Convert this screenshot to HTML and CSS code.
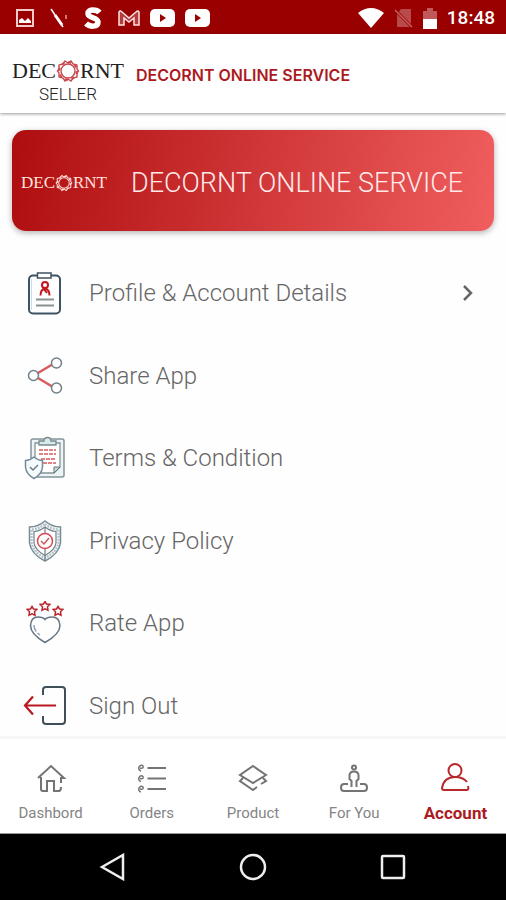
FILE: index.html
```html
<!DOCTYPE html>
<html lang="en">
<head>
<meta charset="utf-8">
<meta name="viewport" content="width=device-width, initial-scale=1">
<title>Decornt Seller</title>
<link rel="stylesheet" href="styles.css">
</head>
<body>
<svg class="sprite" aria-hidden="true">
  <symbol id="ring" viewBox="0 0 24 24">
    <g fill="none" stroke="currentColor" stroke-width="1.400">
      <circle cx="12" cy="12" r="7"/>
      <path d="M9 2 12 4 15 2 17 5 21 6V10L22.500 12 21 14V18L17 19 15 22 12 20 9 22 7 19 3 18V14L1.500 12 3 10V6L7 5Z"/>
      <circle cx="12" cy="12" r="8.800" stroke-width="2" stroke-dasharray="3 3.910"/>
    </g>
  </symbol>
  <symbol id="star" viewBox="0 0 12 12">
    <path d="M6 1.5 7.5 4 10.8 4.4 8.5 6.8 9 10.2 6 8.8 3 10.2 3.5 6.8 1.2 4.4 4.5 4Z" fill="none" stroke="#b8252b" stroke-width="1.5"/>
  </symbol>
</svg>

<div class="status">
  <div class="status-group status-left">
    <svg width="18" height="18" viewBox="0 0 18 18"><path d="M1 1H17V17H1Z" fill="none" stroke="#f3caca" stroke-width="2"/><path d="M3 14V11L6 9 9 12 12 9 15 12V14Z" fill="#fff"/></svg>
    <svg width="18" height="20" viewBox="0 0 18 20"><path d="M1 1 13 19" stroke="#fff" stroke-width="1.5"/><path d="M5 7 12 17" stroke="#fff" stroke-width="3"/><path d="M16 7V11" stroke="#e29a9a" stroke-width="1.5"/></svg>
    <svg width="18" height="24" viewBox="0 0 18 24"><path d="M15.500 6.500C13 3.500 4 2.500 4 7.500 4 12.500 14 11 14 16 14 21.500 5.500 21 2 17.500" fill="none" stroke="#fff" stroke-width="5.500"/></svg>
    <svg width="22" height="16" viewBox="0 0 22 16"><path d="M1 15V2Q2 0 4 2L11 8 18 2Q20 0 21 2V15H16V8L11 12 6 8V15Z" fill="#b43c3c" stroke="#fbe3e3" stroke-width="1.500"/></svg>
    <svg width="25" height="18" viewBox="0 0 25 18"><rect width="25" height="18" rx="5" fill="#fff"/><path d="M10 5 16 9 10 13Z" fill="#900"/></svg>
    <svg width="25" height="18" viewBox="0 0 25 18"><rect width="25" height="18" rx="5" fill="#fff"/><path d="M10 5 16 9 10 13Z" fill="#900"/></svg>
  </div>
  <div class="status-group">
    <svg width="26" height="20" viewBox="0 0 26 20"><path d="M0 5Q13-5 26 5L13 20Z" fill="#fff"/></svg>
    <svg width="19" height="20" viewBox="0 0 19 20"><path d="M7 1H17V19H3V6Z" fill="#b84a4a"/><path d="M1 2 18 19" stroke="#900" stroke-width="3"/><path d="M1 2 18 19" stroke="#c86464" stroke-width="1.500"/></svg>
    <svg width="14" height="21" viewBox="0 0 14 21"><path d="M0 3H4V0H10V3H14V12H0Z" fill="#c05a5a"/><path d="M0 11H14V21H0Z" fill="#fff"/></svg>
    <span class="clock">18:48</span>
  </div>
</div>

<header class="header">
  <div class="brand">
    <div class="logo"><span>DEC</span><svg class="ring" role="img" aria-label="O"><use href="#ring"/></svg><span>RNT</span></div>
    <div class="brand-sub">SELLER</div>
  </div>
  <h1 class="title">DECORNT ONLINE SERVICE</h1>
</header>

<main class="main">
  <section class="card">
    <div class="logo logo-small"><span>DEC</span><svg class="ring" role="img" aria-label="O"><use href="#ring"/></svg><span>RNT</span></div>
    <h2 class="card-title">DECORNT ONLINE SERVICE</h2>
  </section>

  <div class="menu">
    <a class="item" href="#profile">
      <svg class="icon" viewBox="0 0 44 44" fill="none">
        <rect x="6" y="4.500" width="31" height="38" rx="4" stroke="#3d5263" stroke-width="2"/>
        <path d="M8.500 8V39" stroke="#c5dff0"/>
        <path d="M15.500 2H28V7H14.500V2Z" fill="#fff" stroke="#3d5263" stroke-width="1.500"/>
        <circle cx="22" cy="14" r="3" stroke="#c01820" stroke-width="2"/>
        <path d="M17.500 24.500Q17.500 18.500 22 17.500 26.500 18.500 26.500 24.500M20 17 24 22" stroke="#c01820" stroke-width="2"/>
        <path d="M13 28.500H31M13 34.500H31" stroke="#87938f" stroke-width="2"/>
      </svg>
      <span class="label">Profile &amp; Account Details</span>
      <svg class="chevron" viewBox="0 0 12 18"><path d="M2 2 9 9 2 16" fill="none" stroke="#666" stroke-width="2.500"/></svg>
    </a>
    <a class="item" href="#share">
      <svg class="icon" viewBox="0 0 44 44" fill="none">
        <path d="M15 19 30 10M15 24 30 33" stroke="#d95a5e" stroke-width="2.500"/>
        <g stroke="#70808a" stroke-width="1.500" fill="#fff"><circle cx="33.500" cy="9" r="5"/><circle cx="10.500" cy="21.500" r="5"/><circle cx="33.500" cy="34" r="5"/></g>
      </svg>
      <span class="label">Share App</span>
    </a>
    <a class="item" href="#terms">
      <svg class="icon" viewBox="0 0 44 44" fill="none">
        <rect x="8" y="3" width="33" height="38" rx="2" fill="#eef4f4" stroke="#83949a" stroke-width="1.500"/>
        <path d="M12 7H37V31L31 37H12Z" fill="#fff" stroke="#83949a" stroke-width="1.300"/>
        <path d="M31 37V31H37Z" fill="#c9d8d8" stroke="#66757b"/>
        <path d="M16 9V5H21Q21 1.500 24.500 1.500T28 5H33V9Z" fill="#d9e8e8" stroke="#778a90" stroke-width="1.300"/>
        <path d="M16 14H33M16 18H33M18 23H33M20 27H33" stroke="#d65a5e" stroke-width="1.500" stroke-dasharray="4 1"/>
        <path d="M11 21Q7 24.500 2.500 24.500V31Q3 38 11 42.500 19 38 19.500 31V24.500Q15 24.500 11 21Z" fill="#f5fafc" stroke="#778a99" stroke-width="1.500"/>
        <path d="M7 31 10 34 15 29" stroke="#657985" stroke-width="1.400"/>
      </svg>
      <span class="label">Terms &amp; Condition</span>
    </a>
    <a class="item" href="#privacy">
      <svg class="icon" viewBox="0 0 44 44" fill="none">
        <path d="M22 2Q29 8 37.500 8V24Q36 35 22 42 8 35 6.500 24V8Q15 8 22 2Z" stroke="#788a94" stroke-width="1.500"/>
        <path d="M22 5Q28 10 35.500 10.500V24Q34 33 22 39 10 33 8.500 24V10.500Q16 10 22 5Z" stroke="#b3c3c9" stroke-width="2.500" stroke-dasharray="2 1"/>
        <path d="M22 8Q27 12 33 12.500V24Q32 31 22 36.500 12 31 11 24V12.500Q17 12 22 8Z" fill="#fff" stroke="#6f7f87" stroke-width="1.200"/>
        <path d="M22 8V15M22 30V41" stroke="#6f7f87" stroke-width="1.200"/>
        <circle cx="22" cy="22" r="7.500" fill="#fff" stroke="#d9484e" stroke-width="1.500"/>
        <path d="M18 22 21 25 26 19" stroke="#c85c5f" stroke-width="1.500"/>
      </svg>
      <span class="label">Privacy Policy</span>
    </a>
    <a class="item" href="#rate">
      <svg class="icon" viewBox="0 0 44 44" fill="none">
        <use href="#star" x="3" y="4" width="12" height="12"/><use href="#star" x="16" y="-1" width="12" height="12"/><use href="#star" x="29" y="4" width="12" height="12"/>
        <path d="M22 41.500Q7.500 33 7.500 24.500 8 16 15 16 20 16 22 18.500 24 16 29 16 36.500 16 37 24.500 37 33 22 41.500Z" stroke="#657480" stroke-width="1.500"/>
        <path d="M11 24Q11 30 17 34" stroke="#8aa5bb" stroke-width="1.500" stroke-dasharray="7 2"/>
      </svg>
      <span class="label">Rate App</span>
    </a>
    <a class="item" href="#signout">
      <svg class="icon" viewBox="0 0 44 44" fill="none">
        <path d="M20 11V6Q20 3 23 3H39Q42 3 42 6V37Q42 40 39 40H23Q20 40 20 37V32" stroke="#3f4f58" stroke-width="2"/>
        <path d="M33 21.500H2M10 12.500 2 21.500 10 30.500" stroke="#b81820" stroke-width="2.200"/>
      </svg>
      <span class="label">Sign Out</span>
    </a>
  </div>
</main>

<nav class="tabs">
  <a class="tab" href="#dashboard">
    <svg class="tab-icon" viewBox="0 0 30 30"><path d="M2 15 15 3 28 15H25V20M5 14V26Q5 28 7 28H11V18H18V28H23Q25 28 25 24"/></svg>
    <span>Dashbord</span>
  </a>
  <a class="tab" href="#orders">
    <svg class="tab-icon" viewBox="0 0 30 30"><path d="M10.500 5H29M10.500 15.500H29M10.500 26H29"/><path stroke-width="1.500" d="M4 8Q1 7 2 4 4 1 6 3 7 6 3 5M4 18.500Q1 17.500 2 14.500 4 11.500 6 13.500 7 16.500 3 15.500M4 29Q1 28 2 25 4 22 6 24 7 27 3 26"/></svg>
    <span>Orders</span>
  </a>
  <a class="tab" href="#product">
    <svg class="tab-icon" viewBox="0 0 30 30"><path d="M15 3 28 12 15 20 2 12ZM5 15 2 18 15 27 19 24M25 15 28 18 23 21"/></svg>
    <span>Product</span>
  </a>
  <a class="tab" href="#foryou">
    <svg class="tab-icon" viewBox="0 0 30 30"><circle cx="15" cy="4.500" r="2"/><path d="M12.500 24V18L10.500 16V12Q11 8.500 15 8.500T19.500 12V16L17.500 18V24M9 21H5Q2 21 2 24.500T5 28H25Q28 28 28 24.500T25 21H21"/></svg>
    <span>For You</span>
  </a>
  <a class="tab tab-active" href="#account" aria-current="page">
    <svg class="tab-icon" viewBox="0 0 30 30"><circle cx="15" cy="7.500" r="6.500"/><path d="M27 19Q23 14 15 14 4 14 2 25 2 27 4 27H27Q29 27 28 23"/></svg>
    <span>Account</span>
  </a>
</nav>

<div class="system">
  <button class="sys" aria-label="Back"><svg viewBox="0 0 28 28"><path d="M3 14 24 2V26Z"/></svg></button>
  <button class="sys" aria-label="Home"><svg viewBox="0 0 28 28"><circle cx="14" cy="14" r="12"/></svg></button>
  <button class="sys" aria-label="Recent apps"><svg viewBox="0 0 28 28"><rect x="3" y="3" width="22" height="22" rx="1"/></svg></button>
</div>
</body>
</html>
```
FILE: styles.css
```css
* { box-sizing: border-box; }

body {
  margin: 0;
  min-height: 100vh;
  display: flex;
  flex-direction: column;
  background: #fefefe;
  color: #666;
  font-family: Roboto, "Liberation Sans", sans-serif;
}

a { color: inherit; text-decoration: none; }
h1, h2 { margin: 0; }
.sprite { position: absolute; width: 0; height: 0; }

.status {
  height: 34px;
  padding: 2px 11px 0 16px;
  display: flex;
  align-items: center;
  justify-content: space-between;
  background: #990000;
  color: #fff;
}
.status-group { display: flex; align-items: center; gap: 10px; }
.status-left { gap: 16px; }
.status-left svg:nth-child(n + 5) { margin-left: -6px; }
.clock { font-size: 19px; font-weight: 500; line-height: 24px; }

.header {
  height: 79px;
  padding: 0 12px;
  display: flex;
  align-items: center;
  gap: 12px;
  background: #fff;
  box-shadow: 0 1px 3px rgba(0, 0, 0, .4);
}
.brand { display: flex; flex-direction: column; align-items: center; padding-top: 16px; }
.logo {
  display: flex;
  align-items: center;
  color: #222;
  font-family: "Liberation Serif", serif;
  font-size: 22px;
  line-height: 24px;
}
.ring { width: 24px; height: 24px; color: #c9474e; }
.brand-sub { font-size: 17px; line-height: 22px; font-weight: 300; color: #222; }
.title { padding-top: 2px; font-size: 16px; line-height: 24px; font-weight: 600; color: #ab1a1e; font-family: Inter, sans-serif; }

.main { flex: 1; display: flex; flex-direction: column; padding: 17px 12px 8px; }
.card {
  height: 101px;
  padding: 4px 9px 0;
  display: flex;
  align-items: center;
  gap: 24px;
  border-radius: 14px;
  background: linear-gradient(100deg, #ae0d0f, #f05e5e);
  box-shadow: 0 2px 6px rgba(0, 0, 0, .3);
}
.logo-small { font-size: 17px; color: #ffe3df; }
.logo-small .ring { width: 18px; height: 18px; color: #ffd5d0; }
.card-title { font-size: 27px; line-height: 32px; font-weight: 300; color: #ffeaea; white-space: nowrap; }

.menu {
  flex: 1;
  display: flex;
  flex-direction: column;
  justify-content: space-between;
  padding-top: 40px;
}
.item { display: flex; align-items: center; padding: 0 20px 0 11px; }
.icon { width: 44px; height: 44px; }
.label { flex: 1; margin-left: 22px; font-size: 24px; line-height: 32px; font-weight: 300; }
.chevron { width: 12px; height: 18px; }

.tabs {
  height: 98px;
  display: flex;
  align-items: center;
  border-top: 3px solid #f6f6f6;
  border-bottom: 1px solid #999;
  background: #fff;
}
.tab {
  flex: 1;
  display: flex;
  flex-direction: column;
  align-items: center;
  gap: 10px;
  padding-top: 14px;
  font-size: 15px;
  line-height: 20px;
  color: #858585;
}
.tab-icon { width: 30px; height: 30px; fill: none; stroke: #747474; stroke-width: 2; }
.tab-active { color: #ab1a1e; font-size: 17px; font-weight: 700; }
.tab-active .tab-icon { stroke: #b5282c; }

.system {
  height: 66px;
  display: flex;
  align-items: center;
  justify-content: center;
  gap: 112px;
  background: #000;
}
.sys { width: 28px; height: 28px; padding: 0; border: 0; background: none; }
.sys svg { display: block; width: 28px; height: 28px; fill: none; stroke: #eee; stroke-width: 2.500; }
```
